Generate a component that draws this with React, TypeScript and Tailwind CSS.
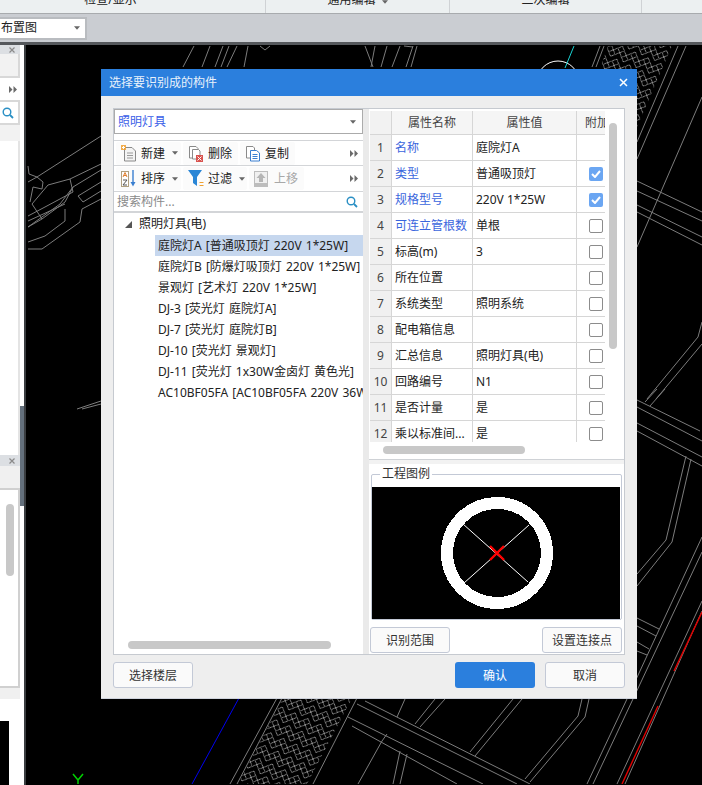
import React from "react";

const FONT = { fontFamily: '"Noto Sans","Noto Sans CJK SC",sans-serif' };

const canvasLines: string[] = [
  // top strip
  "194,47 183,68","210,47 202,68","223,47 215,68","229,47 221,68","237,47 227,68","248,47 244,68","260,47 265,51 270,47",
  "365,47 373,68","375,47 371,68","387,47 381,68","400,47 392,68","413,47 406,68","417,47 411,68","404,47 413,48",
  "600,47 592,68","604,47 596,68","678,47 637,143","686,47 637,160","702,98 637,248",
  // right crossing
  "637,182 702,213","637,192 702,222","637,206 702,238","637,213 702,246",
  "702,323 698,338 647,400","702,345 656,400",
  "657,390 645,403","665,390 650,407",
  "637,401 700,432","637,408 702,442","637,424 702,458","637,432 702,467",
  "686,457 666,541 637,575","691,460 672,543 637,587",
  "702,538 627,700 587,785","702,553 633,700 593,785",
  "637,619 659,630","637,627 656,637","637,643 649,650","637,652 647,656",
  "702,602 617,785","702,612 625,785",
  // bottom
  "277,699 230,785","282,699 237,785","357,699 313,785",
  "365,702 530,785","357,705 517,785","348,718 483,785","352,727 457,785",
  "405,700 397,718","387,735 382,742 358,785",
  "435,700 415,725","445,700 420,728",
  "513,700 470,753","522,700 475,757",
  "400,752 393,785","407,755 400,785",
  "582,700 578,717 525,780","589,700 585,718 530,783",
  // left cluster
  "101,137 37,178 28,183","101,165 70,180 48,186 32,205 42,220",
  "101,171 73,188 65,203 42,220 28,228","70,180 73,193 45,208 28,217",
  "101,183 78,197 83,203 101,192","101,200 82,210 80,223 42,250 28,250",
  "65,210 65,222 45,237 28,243","37,178 43,183 42,190 33,188 30,203",
  "28,167 29,175 37,178","73,188 60,205 28,228","28,222 65,205","77,410 101,402","82,410 101,405",
];

function CanvasDrawing() {
  return (
    <svg className="absolute left-0 top-0" width="702" height="785" viewBox="0 0 702 785" style={{ marginLeft: -26, marginTop: -46 }}>
      <defs>
        <pattern id="herring" width="14" height="14" patternUnits="userSpaceOnUse" patternTransform="rotate(24)">
          <path d="M0 0L7 7L14 0M0 7L7 14L14 7M3.5 3.5L0 7M10.5 3.5L14 7M7 7L3.5 10.5M7 7L10.5 10.5" fill="none" stroke="#8a8a8a" strokeWidth="1" />
        </pattern>
      </defs>
      <polygon points="608,47 672,47 637,128 637,140 600,140 600,69" fill="url(#herring)" />
      <polygon points="283,699 352,699 307,785 238,785" fill="url(#herring)" />
      {canvasLines.map((p) => (
        <polyline key={p} points={p} fill="none" stroke="#7c7c7c" strokeWidth="1" />
      ))}
      <circle cx="558" cy="83" r="21" fill="none" stroke="#fff" strokeWidth="1" />
      <line x1="574" y1="47" x2="565" y2="69" stroke="#19d3d3" strokeWidth="1" />
      <line x1="239" y1="699" x2="192" y2="785" stroke="#0000ee" strokeWidth="1" />
      <line x1="702" y1="613" x2="674" y2="672" stroke="#e00000" strokeWidth="1.4" />
      <line x1="658" y1="707" x2="622" y2="785" stroke="#e00000" strokeWidth="1.4" />
      <path d="M73 775L78 781L83 775M78 781V785" fill="none" stroke="#00d000" strokeWidth="1.5" />
    </svg>
  );
}

function DoubleArrow() {
  return (
    <svg width="8" height="7" viewBox="0 0 8 7" className="shrink-0">
      <path d="M0 0L3.5 3.5L0 7ZM4.5 0L8 3.5L4.5 7Z" fill="#6a6a6a" />
    </svg>
  );
}

function Caret() {
  return (
    <svg width="6" height="4" viewBox="0 0 7 4" className="shrink-0">
      <path d="M0 0H7L3.5 4Z" fill="#666" />
    </svg>
  );
}

function SearchIcon({ className }: { className?: string }) {
  return (
    <svg width="12" height="12" viewBox="0 0 12 12" className={className}>
      <circle cx="5" cy="5" r="3.8" fill="none" stroke="#2a8fc4" strokeWidth="1.4" />
      <path d="M8 8L11 11" stroke="#2a8fc4" strokeWidth="1.8" />
    </svg>
  );
}

const NewIcon = () => (
  <svg width="16" height="17" viewBox="0 0 16 17">
    <path d="M3.5 2.5H11L14.5 6V16H3.5Z" fill="#f4f4f4" stroke="#8a8a8a" />
    <path d="M6 8H12M6 10.5H12M6 13H12" stroke="#9a9a9a" />
    <path d="M0 0H5V5H0Z" fill="#f0a030" opacity="0.85" />
    <path d="M1 2.5H4M2.5 1V4" stroke="#fff" />
  </svg>
);
const DeleteIcon = () => (
  <svg width="16" height="17" viewBox="0 0 16 17">
    <path d="M1.5 1.5H8L10 3.5V13H1.5Z" fill="#fff" stroke="#8a8a8a" />
    <path d="M4.5 4.5H10.5L12 6V14H4.5Z" fill="#fff" stroke="#8a8a8a" />
    <rect x="8" y="10" width="7" height="7" fill="#d9534f" />
    <path d="M9.5 11.5L13.5 15.5M13.5 11.5L9.5 15.5" stroke="#fff" />
  </svg>
);
const CopyIcon = () => (
  <svg width="16" height="17" viewBox="0 0 16 17">
    <path d="M1.5 1.5H8L9.5 3V13H1.5Z" fill="#fff" stroke="#8a8a8a" />
    <path d="M5.5 5.5H11.5L14.5 8V16H5.5Z" fill="#fff" stroke="#3a7fd0" />
    <path d="M7.5 9.5H12.5M7.5 11.5H12.5M7.5 13.5H12.5" stroke="#3a7fd0" />
  </svg>
);
const SortIcon = () => (
  <svg width="16" height="17" viewBox="0 0 16 17">
    <rect x="0.5" y="1.5" width="7" height="15" fill="#fff" stroke="#b0a080" />
    <path d="M2 7L4 2.5L6 7M2.8 5.5H5.2" fill="none" stroke="#e08030" />
    <path d="M2 10H6L2 15H6" fill="none" stroke="#555" />
    <path d="M12 0V14" stroke="#3a7fd0" strokeWidth="1.4" />
    <path d="M9.5 12L12 16.5L14.5 12Z" fill="#3a7fd0" />
  </svg>
);
const FilterIcon = () => (
  <svg width="16" height="17" viewBox="0 0 16 17">
    <path d="M0 0H14L9 7V16L5 13V7Z" fill="#2a86d6" />
    <path d="M11.5 12.5H15.5M11.5 15.5H15.5" stroke="#f0a030" />
  </svg>
);
const UpIcon = () => (
  <svg width="14" height="16" viewBox="0 0 14 16">
    <rect width="14" height="16" fill="#bdbdbd" />
    <rect x="1" y="1" width="12" height="11" fill="#f0f0f0" />
    <path d="M7 2L11.5 7H9V11H5V7H2.5Z" fill="#b5b5b5" />
  </svg>
);

function ToolBtn({ icon, label, caret, muted, w }: { icon: React.ReactNode; label: string; caret?: boolean; muted?: boolean; w: string }) {
  return (
    <div className={`flex h-[23px] shrink-0 items-center rounded-[2px] bg-[#fbfbfb] pl-[5px] ${w}`}>
      <span className="flex w-[20px] shrink-0 items-center">{icon}</span>
      <span className={`whitespace-nowrap pt-[1px] text-[12px] leading-none ${muted ? "text-[#a8a8a8]" : "text-[#222]"}`}>{label}</span>
      {caret && (
        <span className="ml-[7px] flex">
          <Caret />
        </span>
      )}
    </div>
  );
}

function Check({ on }: { on: boolean }) {
  return on ? (
    <span className="flex h-[14px] w-[14px] items-center justify-center rounded-[2px] bg-[#6ba6f2]">
      <svg width="10" height="8" viewBox="0 0 10 8">
        <path d="M1 4L4 7L9 1" fill="none" stroke="#fff" strokeWidth="2" />
      </svg>
    </span>
  ) : (
    <span className="h-[14px] w-[14px] rounded-[2px] border border-[#8c8c8c] bg-white" />
  );
}

const rows: { n: number; name: string; value: string; check: boolean | null; blue?: boolean }[] = [
  { n: 1, name: "名称", value: "庭院灯A", check: null, blue: true },
  { n: 2, name: "类型", value: "普通吸顶灯", check: true, blue: true },
  { n: 3, name: "规格型号", value: "220V 1*25W", check: true, blue: true },
  { n: 4, name: "可连立管根数", value: "单根", check: false, blue: true },
  { n: 5, name: "标高(m)", value: "3", check: false },
  { n: 6, name: "所在位置", value: "", check: false },
  { n: 7, name: "系统类型", value: "照明系统", check: false },
  { n: 8, name: "配电箱信息", value: "", check: false },
  { n: 9, name: "汇总信息", value: "照明灯具(电)", check: false },
  { n: 10, name: "回路编号", value: "N1", check: false },
  { n: 11, name: "是否计量", value: "是", check: false },
  { n: 12, name: "乘以标准间...", value: "是", check: false },
];

const treeItems = [
  "庭院灯A [普通吸顶灯 220V 1*25W]",
  "庭院灯B [防爆灯吸顶灯 220V 1*25W]",
  "景观灯 [艺术灯 220V 1*25W]",
  "DJ-3 [荧光灯 庭院灯A]",
  "DJ-7 [荧光灯 庭院灯B]",
  "DJ-10 [荧光灯 景观灯]",
  "DJ-11 [荧光灯 1x30W金卤灯 黄色光]",
  "AC10BF05FA [AC10BF05FA 220V 36W]",
];

function FooterBtn({ label, primary, w }: { label: string; primary?: boolean; w: string }) {
  return (
    <button
      className={`flex h-[26px] items-center justify-center rounded-[3px] pt-[1px] text-[12px] ${w} ${
        primary ? "bg-[#2b7fdd] text-white" : "border border-[#c3c9d6] bg-[#fafafa] text-[#333]"
      }`}
    >
      {label}
    </button>
  );
}

function Dialog() {
  return (
    <div className="absolute left-[101px] top-[69px] flex h-[630px] w-[536px] flex-col border-b border-[#cfd3dc] bg-[#eeeeee]">
      <div className="flex h-[27px] shrink-0 items-center justify-between bg-[#2b7fdd] pl-[8px] pr-[9px] text-[12px] text-[#e8f1fb]">
        <span>选择要识别成的构件</span>
        <svg width="9" height="9" viewBox="0 0 9 9">
          <path d="M1 1L8 8M8 1L1 8" stroke="#fff" strokeWidth="1.5" />
        </svg>
      </div>

      <div className="ml-[12px] mt-[12px] flex h-[547px] w-[512px] border border-[#c6cad0]">
        {/* left column */}
        <div className="flex w-[249px] shrink-0 flex-col bg-white">
          <div className="flex h-[25px] shrink-0 items-center justify-between border border-[#ababab] pl-[3px] pr-[6px]">
            <span className="text-[12px] text-[#3a5ee8]">照明灯具</span>
            <Caret />
          </div>
          <div className="mt-[6px] flex h-[26px] shrink-0 items-center gap-[2px] border-y border-[#d3d5d8] bg-white pl-[2px] pr-[5px]">
            <ToolBtn icon={<NewIcon />} label="新建" caret w="w-[65px]" />
            <ToolBtn icon={<DeleteIcon />} label="删除" w="w-[55px]" />
            <ToolBtn icon={<CopyIcon />} label="复制" w="w-[55px]" />
            <span className="ml-auto">
              <DoubleArrow />
            </span>
          </div>
          <div className="flex h-[26px] shrink-0 items-center gap-[2px] border-b border-[#d3d5d8] bg-white pl-[2px] pr-[5px]">
            <ToolBtn icon={<SortIcon />} label="排序" caret w="w-[65px]" />
            <ToolBtn icon={<FilterIcon />} label="过滤" caret w="w-[64px]" />
            <ToolBtn icon={<UpIcon />} label="上移" muted w="w-[55px]" />
            <span className="ml-auto">
              <DoubleArrow />
            </span>
          </div>
          <div className="flex h-[21px] shrink-0 items-center justify-between border-b-2 border-[#d3d5d8] pl-[3px] pr-[5px]">
            <span className="text-[12px] text-[#8a8a8a]">搜索构件...</span>
            <SearchIcon />
          </div>
          <div className="relative min-h-0 flex-1 overflow-hidden">
            <div className="flex h-[22px] items-center pl-[11px] text-[12px] text-[#222]">
              <svg width="7" height="7" viewBox="0 0 7 7" className="mr-[7px]">
                <path d="M7 0V7H0Z" fill="#555" />
              </svg>
              <span>照明灯具(电)</span>
            </div>
            {treeItems.map((t, i) => (
              <div
                key={t}
                className={`ml-[41px] flex h-[21px] items-center overflow-hidden whitespace-nowrap pl-[3px] text-[12px] text-[#222] [word-spacing:1px] ${
                  i === 0 ? "bg-[#c6d7ee]" : ""
                }`}
              >
                {t}
              </div>
            ))}
            <div className="absolute bottom-[5px] left-[14px] h-[8px] w-[203px] rounded-full bg-[#c8c8c8]" />
          </div>
        </div>

        {/* splitter */}
        <div className="w-[6px] shrink-0 bg-[#eaeaea]" />

        {/* right column */}
        <div className="flex min-w-0 flex-1 flex-col bg-white">
          <div className="relative h-[350px] shrink-0 pl-[1px] pt-[2px]">
            <div className="h-[331px] w-[235px] overflow-hidden">
              <div className="grid grid-cols-[21px_81px_104px_29px] text-[12px] leading-none">
                <div className="h-[24px] border-b border-[#d6d6d6] bg-[#f2f2f2]" />
                <div className="flex h-[24px] items-center justify-center border-b border-l border-[#d6d6d6] bg-[#f5f5f5] text-[#444]">属性名称</div>
                <div className="flex h-[24px] items-center justify-center border-b border-l border-[#d6d6d6] bg-[#f5f5f5] text-[#444]">属性值</div>
                <div className="flex h-[24px] items-center overflow-hidden whitespace-nowrap border-b border-l border-[#d6d6d6] bg-[#f5f5f5] pl-[8px] text-[#444]">附加</div>
                {rows.map((r) => (
                  <React.Fragment key={r.n}>
                    <div className="flex h-[26px] items-center justify-center border-b border-[#d6d6d6] bg-[#f0f0f0] text-[#444]">{r.n}</div>
                    <div className={`flex h-[26px] items-center overflow-hidden whitespace-nowrap border-b border-l border-[#d6d6d6] pl-[3px] ${r.blue ? "text-[#3a66dd]" : "text-[#222]"}`}>
                      {r.name}
                    </div>
                    <div className="flex h-[26px] items-center border-b border-l border-[#d6d6d6] pl-[3px] text-[#222]">{r.value}</div>
                    <div className="flex h-[26px] items-center border-b border-l border-[#d6d6d6] pl-[12px]">
                      {r.check !== null && <Check on={r.check} />}
                    </div>
                  </React.Fragment>
                ))}
              </div>
            </div>
            <div className="absolute left-[240px] top-[14px] h-[226px] w-[8px] rounded-full bg-[#c8c8c8]" />
            <div className="absolute left-[14px] top-[337px] h-[8px] w-[142px] rounded-full bg-[#c8c8c8]" />
          </div>
          <div className="h-[5px] shrink-0 border-t border-[#cfd2d6] bg-[#f2f2f2]" />
          <div className="relative ml-[2px] mt-[10px] h-[146px] w-[251px] shrink-0 rounded-[2px] border border-[#c3c9d6] pt-[12px]">
            <span className="absolute left-[8px] top-[-9px] bg-white px-[2px] text-[12px] leading-[16px] text-[#333]">工程图例</span>
            <svg width="248" height="132" viewBox="0 0 248 132" className="block bg-black" shapeRendering="crispEdges">
              <circle cx="125" cy="66" r="50" fill="none" stroke="#fff" strokeWidth="12" />
              <path d="M91 37L156 95M157 38L92 96" stroke="#fff" strokeWidth="1" fill="none" shapeRendering="auto" />
              <path d="M118 59L132 73M132 59L118 73" stroke="#ff0000" strokeWidth="2.4" fill="none" shapeRendering="auto" />
            </svg>
          </div>
          <div className="ml-[1px] mt-[7px] flex w-[252px] justify-between">
            <FooterBtn label="识别范围" w="w-[80px]" />
            <FooterBtn label="设置连接点" w="w-[80px]" />
          </div>
        </div>
      </div>

      <div className="ml-[12px] mr-[12px] mt-[7px] flex items-center">
        <FooterBtn label="选择楼层" w="w-[80px]" />
        <div className="ml-auto flex gap-[10px]">
          <FooterBtn label="确认" primary w="w-[80px]" />
          <FooterBtn label="取消" w="w-[80px]" />
        </div>
      </div>
    </div>
  );
}

function SidePanel() {
  return (
    <div className="flex h-full w-[20px] shrink-0 flex-col bg-white">
      <div className="flex h-[9px] shrink-0 items-center justify-end bg-[#dcdfe3] pr-[5px]">
        <svg width="6" height="6" viewBox="0 0 6 6"><path d="M0.5 0.5L5.5 5.5M5.5 0.5L0.5 5.5" stroke="#8a8a8a" strokeWidth="1.2" /></svg>
      </div>
      <div className="h-[24px] shrink-0 border-r-2 border-b-2 border-[#d8d8d8] bg-[#f2f2f2]" />
      <div className="flex h-[22px] shrink-0 items-center justify-end pr-[3px]"><DoubleArrow /></div>
      <div className="flex h-[25px] shrink-0 items-center justify-end border-2 border-l-0 border-[#d8d8d8] pr-[4px]"><SearchIcon /></div>
      <div className="h-[16px] shrink-0 bg-[#f2f2f2]" />
      <div className="flex-1 border-r-2 border-[#e4e4e4]" />
      <div className="flex h-[11px] shrink-0 items-center justify-end bg-[#dcdfe3] pr-[5px]">
        <svg width="6" height="6" viewBox="0 0 6 6"><path d="M0.5 0.5L5.5 5.5M5.5 0.5L0.5 5.5" stroke="#8a8a8a" strokeWidth="1.2" /></svg>
      </div>
      <div className="h-[22px] shrink-0 bg-[#f0f0f0]" />
      <div className="relative h-[200px] shrink-0 border-2 border-l-0 border-[#d0d0d0]">
        <div className="absolute left-[6px] top-[14px] h-[72px] w-[8px] rounded-full bg-[#c8c8c8]" />
      </div>
      <div className="h-[11px] shrink-0 bg-[#f0f0f0]" />
      <div className="flex h-[86px] shrink-0 flex-col justify-end">
        <div className="h-[64px] w-[9px] bg-black" />
      </div>
    </div>
  );
}

export default function App() {
  return (
    <div className="relative flex h-[785px] w-[702px] flex-col overflow-hidden bg-white" style={FONT}>
      <div className="flex h-[13px] shrink-0 items-center overflow-hidden bg-[#ecf0f1] text-[12px] text-[#222]">
        <div className="flex h-full w-[266px] items-center justify-center border-r border-[#cfd2d5] pr-[44px]"><span className="-translate-y-[7px]">检查/显示</span></div>
        <div className="flex h-full w-[184px] items-center justify-center gap-[6px] border-r border-[#cfd2d5]"><span className="-translate-y-[7px]">通用编辑</span><span className="-translate-y-[5px]"><Caret /></span></div>
        <div className="flex h-full w-[192px] items-center justify-center border-r border-[#cfd2d5]"><span className="-translate-y-[7px]">二次编辑</span></div>
      </div>
      <div className="flex h-[29px] shrink-0 items-center border-t border-[#a8abae] bg-[#cacdd2]">
        <div className="flex h-[23px] w-[87px] items-center justify-between overflow-hidden border-2 border-l-0 border-[#b9bcc0] bg-white pl-[1px] pr-[5px] text-[12px] text-[#222]">
          <span className="whitespace-nowrap">布置图</span>
          <Caret />
        </div>
      </div>
      <div className="flex min-h-0 flex-1 border-t-[3px] border-[#55585c]">
        <SidePanel />
        <div className="flex w-[6px] shrink-0 items-start border-r-2 border-[#3a3d40] bg-white">
          <div className="mt-[361px] h-[100px] w-[4px] bg-[#64707c]" />
        </div>
        <div className="relative flex-1 overflow-hidden bg-black">
          <CanvasDrawing />
        </div>
      </div>
      <Dialog />
    </div>
  );
}
